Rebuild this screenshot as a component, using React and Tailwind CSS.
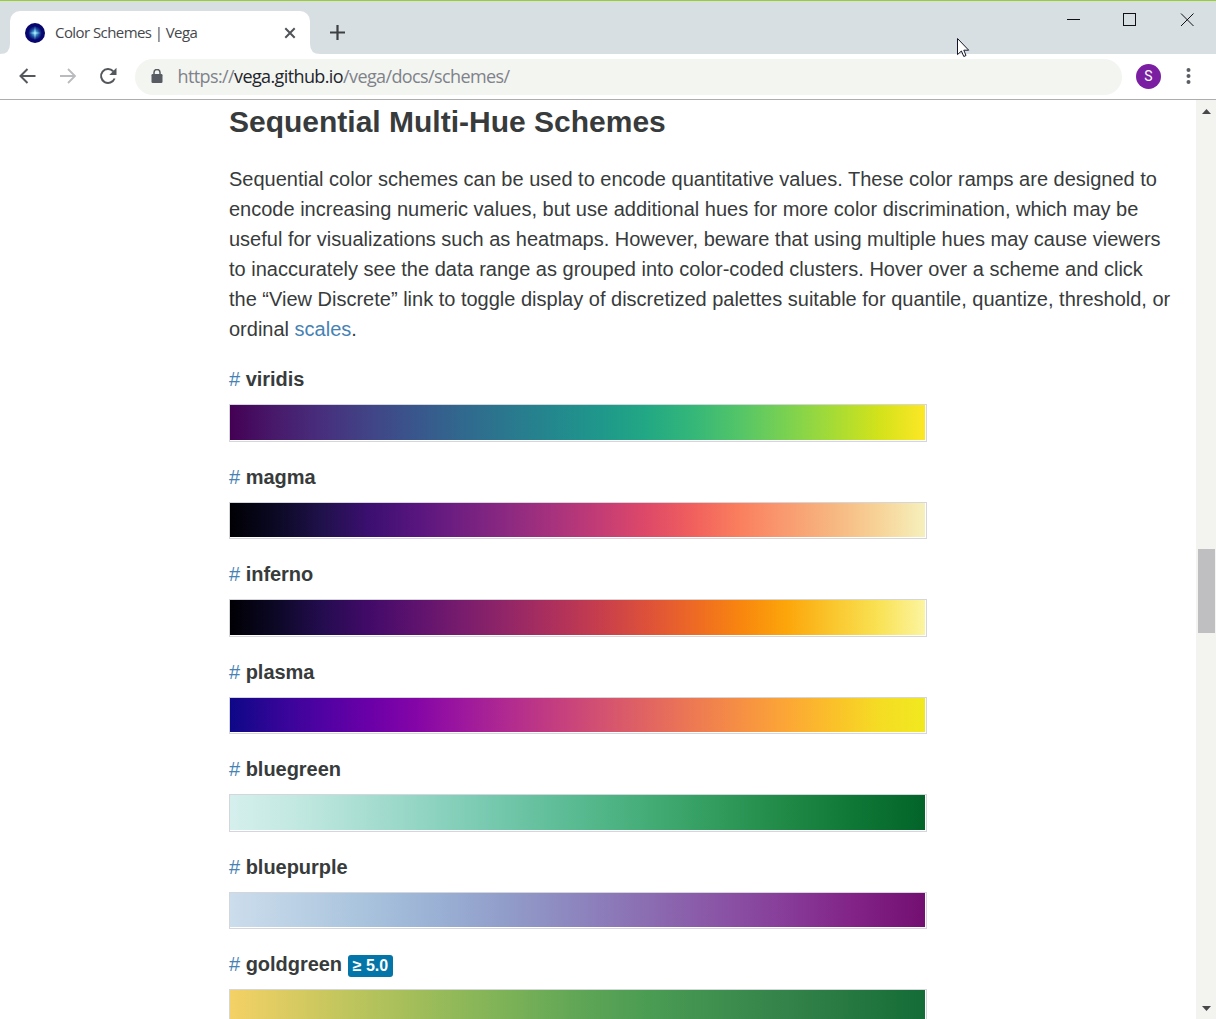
const schemes = [
  {
    name: 'viridis',
    bar: 'bg-[linear-gradient(to_right,#440154,#481a6c,#472f7d,#414487,#39568c,#31688e,#2a788e,#23888e,#1f988b,#22a884,#35b779,#54c568,#7ad151,#a5db36,#d2e21b,#fde725)]',
  },
  {
    name: 'magma',
    bar: 'bg-[linear-gradient(to_right,#000004,#0b0924,#20114b,#3b0f70,#57157e,#721f81,#8c2981,#a8327d,#c43c75,#de4968,#f1605d,#fa7f5e,#f99b70,#f7b680,#f7d398,#f6f0bc)]',
  },
  {
    name: 'inferno',
    bar: 'bg-[linear-gradient(to_right,#000004,#0c0826,#240c4f,#420a68,#5d126e,#781c6d,#932667,#ae305c,#c73e4c,#dd513a,#ed6925,#f8850f,#fca50a,#fac62d,#f9e254,#fcf4a0)]',
  },
  {
    name: 'plasma',
    bar: 'bg-[linear-gradient(to_right,#0d0887,#330597,#5002a2,#6a00a8,#8405a7,#9c179e,#b12a90,#c33d80,#d35171,#e16462,#ed7953,#f68f44,#fca636,#fbc02a,#f5dc24,#f1e91f)]',
  },
  {
    name: 'bluegreen',
    bar: 'bg-[linear-gradient(to_right,#d5efed,#c1e8e0,#a7ddd1,#8bd2be,#70c6a9,#58ba91,#44ad77,#319c5d,#208946,#0e7736,#036429)]',
  },
  {
    name: 'bluepurple',
    bar: 'bg-[linear-gradient(to_right,#ccddec,#bad0e4,#a8c2dd,#9ab0d4,#919cc9,#8d85be,#8b6db2,#8a55a6,#873c99,#822287,#730f71)]',
  },
  {
    name: 'goldgreen',
    badge: '≥ 5.0',
    bar: 'bg-[linear-gradient(to_right,#f4d166,#d5ca60,#b6c35c,#98bb59,#7cb257,#60a656,#4b9c53,#3f8f4f,#33834a,#257740,#146c36)]',
  },
];

const paragraph = [
  'Sequential color schemes can be used to encode quantitative values. These color ramps are designed to',
  'encode increasing numeric values, but use additional hues for more color discrimination, which may be',
  'useful for visualizations such as heatmaps. However, beware that using multiple hues may cause viewers',
  'to inaccurately see the data range as grouped into color-coded clusters. Hover over a scheme and click',
  'the “View Discrete” link to toggle display of discretized palettes suitable for quantile, quantize, threshold, or',
];

function Favicon() {
  return (
    <svg width="20" height="20" viewBox="0 0 20 20">
      <defs>
        <radialGradient id="glow">
          <stop offset="0" stopColor="#d8fbff" />
          <stop offset="0.25" stopColor="#4ba3d6" />
          <stop offset="0.6" stopColor="#1c4c9c" />
          <stop offset="1" stopColor="#06066e" />
        </radialGradient>
      </defs>
      <circle cx="10" cy="10" r="10" fill="#06066e" />
      <circle cx="10" cy="10" r="7" fill="url(#glow)" />
      <path d="M10 3 10.600 9.400 16 10l-5.400.6L10 17l-.6-6.400L4 10l5.400-.6z" fill="#a5e2f6" />
    </svg>
  );
}

function TabStrip() {
  return (
    <div className="flex h-[54px] shrink-0 border-t border-[#9acd32] bg-[#d8dfe3]">
      <div className="flex w-[10px] items-end">
        <svg width="10" height="10" viewBox="0 0 10 10"><path d="M0 10Q10 10 10 0V10z" fill="#fff" /></svg>
      </div>
      <div className="mt-[10px] flex w-[300px] items-center rounded-t-[10px] bg-white pl-[15px]">
        <Favicon />
        <span className="ml-[10px] w-[220px] whitespace-nowrap font-['Open_Sans',sans-serif] text-[15px] tracking-[-0.57px] text-[#45484d]">
          Color Schemes | Vega
        </span>
        <svg className="ml-[9px]" width="12" height="12" viewBox="0 0 12 12">
          <path d="M1.3 1.3 10.7 10.7M10.7 1.3 1.3 10.7" stroke="#505458" strokeWidth="2" />
        </svg>
      </div>
      <div className="flex w-[10px] items-end">
        <svg width="10" height="10" viewBox="0 0 10 10"><path d="M10 10Q0 10 0 0V10z" fill="#fff" /></svg>
      </div>
      <svg className="ml-[10px] mt-[24px]" width="16" height="16" viewBox="0 0 16 16">
        <path d="M7.5 0V15M0 7.5H15" stroke="#3c4043" strokeWidth="2.2" />
      </svg>
      <div className="ml-auto flex pt-[12px]">
        <svg width="150" height="14" viewBox="0 0 150 14" fill="none" stroke="#101014">
          <path d="M1 6.5H14" />
          <rect x="57.5" y=".5" width="12" height="12" />
          <path d="M115 .5 127.500 13M127.500 .5 115 13" />
        </svg>
      </div>
      <svg className="absolute left-[957px] top-[38px]" width="13" height="20" viewBox="0 0 13 20">
        <path d="M.5.5V16.600L4.400 13 6.800 18.500 9 17.500 6.800 12.200H11.700z" fill="#fff" stroke="#15152a" strokeWidth="1" />
      </svg>
    </div>
  );
}

function Toolbar() {
  return (
    <div className="flex h-[46px] shrink-0 items-center border-b border-[#adadad] bg-white">
      <svg className="mb-px ml-[19px]" width="17" height="16" viewBox="0 0 17 16" fill="none" stroke="#54585d" strokeWidth="2">
        <path d="M16.500 8H2M8.500 1 1.500 8 8.500 15" />
      </svg>
      <svg className="mb-px ml-[24px]" width="17" height="16" viewBox="0 0 17 16" fill="none" stroke="#b9bbbe" strokeWidth="1.800">
        <path d="M0 8H14.500M8 1 15 8 8 15" />
      </svg>
      <svg className="mb-px ml-[22px]" width="18" height="18" viewBox="0 0 18 18">
        <path d="M15.600 11.500A7 7 0 1 1 14.200 4.200" fill="none" stroke="#54585d" strokeWidth="2" />
        <path d="M17.500 .800V8H10.300z" fill="#54585d" />
      </svg>
      <div className="ml-[18px] flex h-9 w-[987px] items-center rounded-full bg-[#f3f5f1] pl-[16px]">
        <svg width="12" height="15" viewBox="0 0 12 15">
          <rect x=".5" y="5" width="11" height="9" rx="1.200" fill="#585c62" />
          <path d="M3 6V3.500a3 3 0 0 1 6 0V6" fill="none" stroke="#585c62" strokeWidth="1.500" />
        </svg>
        <span className="ml-[14.500px] whitespace-nowrap font-['Open_Sans',sans-serif] text-[18px] tracking-[-0.610px] text-[#7f828a]">
          https://<span className="text-[#22242c]">vega.github.io</span>/vega/docs/schemes/
        </span>
      </div>
      <div className="ml-[14px] flex size-[25px] items-center justify-center rounded-full bg-[#7b1fa2] font-['Roboto',sans-serif] text-[14px] text-white">
        S
      </div>
      <svg className="mb-px ml-[25px]" width="5" height="16" viewBox="0 0 5 16" fill="#5a5e63">
        <circle cx="2.500" cy="2" r="2" />
        <circle cx="2.500" cy="8" r="2" />
        <circle cx="2.500" cy="14" r="2" />
      </svg>
    </div>
  );
}

function Scheme({ name, badge, bar }) {
  return (
    <section className="h-[97.500px]">
      <h3 className="flex h-[30px] items-center text-[20px] font-bold leading-[30px] tracking-[-0.040px]">
        <span className="mr-[5.600px] font-normal text-[#4682b4]">#</span>
        {name}
        {badge && (
          <span className="ml-[6px] mt-[3px] flex h-[22px] w-[45px] items-center justify-center rounded-[3px] bg-[#0375a8] text-[16px] text-white">
            {badge}
          </span>
        )}
      </h3>
      <div className="mt-[10px] h-[37.500px] w-[698px] border border-[#d5d5dc] pb-px pr-px">
        <div className={`h-full ${bar}`} />
      </div>
    </section>
  );
}

function Scrollbar() {
  return (
    <div className="flex w-[20px] flex-col items-center bg-[#f3f4f0]">
      <svg className="ml-px mt-[9px]" width="9" height="5" viewBox="0 0 9 5"><path d="M0 5 4.500 0 9 5z" fill="#48484c" /></svg>
      <div className="ml-px mt-[435px] h-[84px] w-[17px] bg-[#bfbfc2]" />
      <svg className="mb-[8px] ml-px mt-auto" width="9" height="5" viewBox="0 0 9 5"><path d="M0 0 4.500 5 9 0z" fill="#48484c" /></svg>
    </div>
  );
}

export default function App() {
  return (
    <div className="relative flex h-[1019px] w-[1216px] flex-col overflow-hidden bg-white font-['Liberation_Sans',Arial,sans-serif] text-[#383b3c]">
      <TabStrip />
      <Toolbar />
      <div className="flex min-h-0 flex-1">
        <main className="min-w-0 flex-1 overflow-hidden pl-[229px]">
          <h2 className="mt-[2px] h-[40px] whitespace-nowrap text-[30px] font-bold leading-[40px]">Sequential Multi-Hue Schemes</h2>
          <p className="mt-[22px] whitespace-nowrap text-[20px] leading-[30px]">
            {paragraph.map((line) => (
              <span className="block" key={line}>{line}</span>
            ))}
            ordinal <a className="text-[#4682b4]">scales</a>.
          </p>
          <div className="mt-[20px]">
            {schemes.map((s) => <Scheme key={s.name} {...s} />)}
          </div>
        </main>
        <Scrollbar />
      </div>
    </div>
  );
}
